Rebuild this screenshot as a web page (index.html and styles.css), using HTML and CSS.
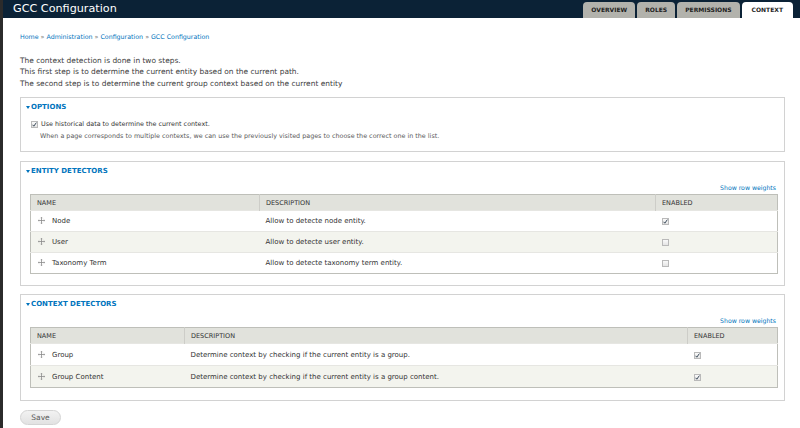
FILE: index.html
```html
<!DOCTYPE html>
<html lang="en">
<head>
<meta charset="utf-8">
<title>GCC Configuration</title>
<link rel="stylesheet" href="styles.css">
</head>
<body>
<div class="page">
  <header class="branding">
    <h1 class="page-title">GCC Configuration</h1>
    <ul class="tabs">
      <li class="tab">OVERVIEW</li>
      <li class="tab">ROLES</li>
      <li class="tab">PERMISSIONS</li>
      <li class="tab active">CONTEXT</li>
    </ul>
  </header>
  <main class="content">
    <nav class="breadcrumb">
      <a href="#">Home</a> » <a href="#">Administration</a> » <a href="#">Configuration</a> » <a href="#">GCC Configuration</a>
    </nav>
    <div class="intro">
      <p>The context detection is done in two steps.</p>
      <p>This first step is to determine the current entity based on the current path.</p>
      <p>The second step is to determine the current group context based on the current entity</p>
    </div>

    <section class="fieldset fs-options">
      <div class="legend"><svg class="tri" width="4" height="3" viewBox="0 0 4 3"><path d="M0 0H4L2 3Z" fill="#0074bd"/></svg>OPTIONS</div>
      <div class="form-item">
        <span class="cb checked"><svg width="7" height="7" viewBox="0 0 7 7"><path d="M1.6 3.8L2.8 5.2L5.4 1.6" fill="none" stroke="#3a4a5a" stroke-width="1"/></svg></span>
        <span class="label">Use historical data to determine the current context.</span>
      </div>
      <div class="description">When a page corresponds to multiple contexts, we can use the previously visited pages to choose the correct one in the list.</div>
    </section>

    <section class="fieldset fs-entity">
      <div class="legend"><svg class="tri" width="4" height="3" viewBox="0 0 4 3"><path d="M0 0H4L2 3Z" fill="#0074bd"/></svg>ENTITY DETECTORS</div>
      <div class="weights"><a href="#">Show row weights</a></div>
      <table class="grid entity">
        <colgroup><col class="c-name"><col class="c-desc"><col class="c-en"></colgroup>
        <thead><tr><th>NAME</th><th>DESCRIPTION</th><th>ENABLED</th></tr></thead>
        <tbody>
          <tr class="odd"><td><span class="handle"><svg width="7" height="7" viewBox="0 0 7 7"><path d="M3.5 0.3V6.7M0.3 3.5H6.7" stroke="#8a8a8a" stroke-width="0.8"/><path d="M2.6 1.2L3.5 0.2L4.4 1.2M2.6 5.8L3.5 6.8L4.4 5.8M1.2 2.6L0.2 3.5L1.2 4.4M5.8 2.6L6.8 3.5L5.8 4.4" fill="none" stroke="#8a8a8a" stroke-width="0.6"/></svg></span>Node</td><td>Allow to detecte node entity.</td><td><span class="cb checked"><svg width="7" height="7" viewBox="0 0 7 7"><path d="M1.6 3.8L2.8 5.2L5.4 1.6" fill="none" stroke="#3a4a5a" stroke-width="1"/></svg></span></td></tr>
          <tr class="even"><td><span class="handle"><svg width="7" height="7" viewBox="0 0 7 7"><path d="M3.5 0.3V6.7M0.3 3.5H6.7" stroke="#8a8a8a" stroke-width="0.8"/><path d="M2.6 1.2L3.5 0.2L4.4 1.2M2.6 5.8L3.5 6.8L4.4 5.8M1.2 2.6L0.2 3.5L1.2 4.4M5.8 2.6L6.8 3.5L5.8 4.4" fill="none" stroke="#8a8a8a" stroke-width="0.6"/></svg></span>User</td><td>Allow to detecte user entity.</td><td><span class="cb"></span></td></tr>
          <tr class="odd"><td><span class="handle"><svg width="7" height="7" viewBox="0 0 7 7"><path d="M3.5 0.3V6.7M0.3 3.5H6.7" stroke="#8a8a8a" stroke-width="0.8"/><path d="M2.6 1.2L3.5 0.2L4.4 1.2M2.6 5.8L3.5 6.8L4.4 5.8M1.2 2.6L0.2 3.5L1.2 4.4M5.8 2.6L6.8 3.5L5.8 4.4" fill="none" stroke="#8a8a8a" stroke-width="0.6"/></svg></span>Taxonomy Term</td><td>Allow to detecte taxonomy term entity.</td><td><span class="cb"></span></td></tr>
        </tbody>
      </table>
    </section>

    <section class="fieldset fs-context">
      <div class="legend"><svg class="tri" width="4" height="3" viewBox="0 0 4 3"><path d="M0 0H4L2 3Z" fill="#0074bd"/></svg>CONTEXT DETECTORS</div>
      <div class="weights"><a href="#">Show row weights</a></div>
      <table class="grid context">
        <colgroup><col class="c-name"><col class="c-desc"><col class="c-en"></colgroup>
        <thead><tr><th>NAME</th><th>DESCRIPTION</th><th>ENABLED</th></tr></thead>
        <tbody>
          <tr class="odd"><td><span class="handle"><svg width="7" height="7" viewBox="0 0 7 7"><path d="M3.5 0.3V6.7M0.3 3.5H6.7" stroke="#8a8a8a" stroke-width="0.8"/><path d="M2.6 1.2L3.5 0.2L4.4 1.2M2.6 5.8L3.5 6.8L4.4 5.8M1.2 2.6L0.2 3.5L1.2 4.4M5.8 2.6L6.8 3.5L5.8 4.4" fill="none" stroke="#8a8a8a" stroke-width="0.6"/></svg></span>Group</td><td>Determine context by checking if the current entity is a group.</td><td><span class="cb checked"><svg width="7" height="7" viewBox="0 0 7 7"><path d="M1.6 3.8L2.8 5.2L5.4 1.6" fill="none" stroke="#3a4a5a" stroke-width="1"/></svg></span></td></tr>
          <tr class="even"><td><span class="handle"><svg width="7" height="7" viewBox="0 0 7 7"><path d="M3.5 0.3V6.7M0.3 3.5H6.7" stroke="#8a8a8a" stroke-width="0.8"/><path d="M2.6 1.2L3.5 0.2L4.4 1.2M2.6 5.8L3.5 6.8L4.4 5.8M1.2 2.6L0.2 3.5L1.2 4.4M5.8 2.6L6.8 3.5L5.8 4.4" fill="none" stroke="#8a8a8a" stroke-width="0.6"/></svg></span>Group Content</td><td>Determine context by checking if the current entity is a group content.</td><td><span class="cb checked"><svg width="7" height="7" viewBox="0 0 7 7"><path d="M1.6 3.8L2.8 5.2L5.4 1.6" fill="none" stroke="#3a4a5a" stroke-width="1"/></svg></span></td></tr>
        </tbody>
      </table>
    </section>

    <div class="actions"><button class="button" type="button">Save</button></div>
  </main>
</div>
</body>
</html>
```

FILE: styles.css
```css
* { box-sizing: border-box; }
html, body { margin: 0; padding: 0; background: #fff; }
body {
  font-family: "DejaVu Sans", Verdana, sans-serif;
  color: #333;
  width: 800px;
  height: 428px;
  overflow: hidden;
}
a { color: #0074bd; text-decoration: none; }

.page {
  border-left: 3px solid #2b2b2b;
  min-height: 428px;
}

.branding {
  height: 18px;
  background: #0b2236;
  display: flex;
  align-items: flex-end;
  justify-content: space-between;
  padding: 0 7px 0 10px;
}
.page-title {
  margin: 0;
  align-self: center;
  font-size: 11.2px;
  font-weight: normal;
  color: #fff;
  line-height: 18px;
}
.tabs {
  list-style: none;
  margin: 0;
  padding: 0;
  display: flex;
  gap: 2px;
}
.tab {
  height: 16px;
  line-height: 16px;
  padding: 0 8px;
  background: #b2b2ac;
  color: #1e1e1e;
  font-size: 6px;
  font-weight: bold;
  border-radius: 4px 4px 0 0;
}
.tab.active {
  background: #fff;
  padding: 0 10px;
}

.content {
  padding: 0 15px 0 17px;
}
.breadcrumb {
  font-size: 6.3px;
  line-height: 10px;
  padding-top: 14px;
  color: #666;
}
.intro {
  margin-top: 13px;
  font-size: 7.45px;
  line-height: 11.35px;
  color: #3c3c3c;
}
.intro p { margin: 0; }

.fieldset {
  border: 1px solid #d2d2d2;
  padding: 0 7px 11px 9px;
}
.fs-options {
  margin-top: 8px;
  padding-bottom: 9px;
}
.fs-entity { margin-top: 9px; }
.fs-context { margin-top: 8px; padding-bottom: 12px; }
.legend {
  height: 19px;
  line-height: 19px;
  font-size: 7px;
  font-weight: bold;
  color: #0074bd;
  margin-left: -4px;
  display: flex;
  align-items: center;
}
.tri { margin-right: 1px; }

.form-item {
  height: 14px;
  display: flex;
  align-items: center;
  font-size: 6.4px;
  color: #333;
}
.form-item .cb { margin: 0 3px 0 1px; }
.description {
  padding-left: 10px;
  font-size: 6.4px;
  line-height: 11.4px;
  color: #595959;
}

.cb {
  display: inline-block;
  width: 7px;
  height: 7px;
  border: 1px solid #b9b9b9;
  background: linear-gradient(#fafafa, #e4e4e4);
  position: relative;
  vertical-align: middle;
}
.cb svg { position: absolute; left: -1px; top: -1px; }

.weights {
  height: 13px;
  line-height: 13px;
  text-align: right;
  font-size: 6.2px;
  padding-right: 1px;
}

.grid {
  width: 100%;
  border-collapse: collapse;
  table-layout: fixed;
  border: 1px solid #bebfb9;
  font-size: 7px;
  color: #333;
}
.grid th {
  height: 16px;
  background: #e1e2dc;
  font-weight: normal;
  font-size: 6.5px;
  text-align: left;
  padding: 0 6px;
  border-left: 1px solid #cdcdc8;
  color: #333;
}
.grid th:first-child { border-left: none; }
.grid td {
  height: 21px;
  padding: 0 6px;
  border-top: 1px solid #e6e6e2;
  vertical-align: middle;
}
.context td { height: 22px; }
.grid tr.odd td { background: #fff; }
.grid tr.even td { background: #f3f4ee; }
.handle {
  display: inline-block;
  width: 7px;
  height: 7px;
  margin: 0 7px 0 1px;
  vertical-align: middle;
  position: relative;
  top: -1px;
}
.handle svg { display: block; }

.entity .c-name { width: 229px; }
.entity .c-desc { width: 396px; }
.entity .c-en { width: 122px; }
.context .c-name { width: 154px; }
.context .c-desc { width: 503px; }
.context .c-en { width: 90px; }

.actions { padding-top: 9px; }
.button {
  display: block;
  font-family: "DejaVu Sans", Verdana, sans-serif;
  font-size: 7.5px;
  color: #5a5a5a;
  width: 41px;
  height: 15px;
  padding: 0;
  border: 1px solid #d4d4d4;
  border-radius: 8px;
  background: linear-gradient(#f2f2f2, #e2e2e2);
}
```
